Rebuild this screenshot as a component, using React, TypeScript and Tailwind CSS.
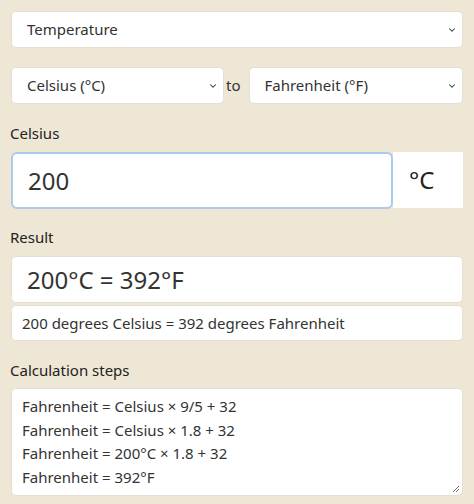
import { ChevronDown } from "lucide-react";

const steps = [
  "Fahrenheit = Celsius × 9/5 + 32",
  "Fahrenheit = Celsius × 1.8 + 32",
  "Fahrenheit = 200°C × 1.8 + 32",
  "Fahrenheit = 392°F",
];

const Select = ({ label, className }: { label: string; className?: string }) => (
  <div
    className={`flex items-center justify-between h-[37px] rounded-[5px] bg-white border border-[#e6e0d2] pl-[15px] pr-[5px] text-[15px] text-[#333] ${className ?? ""}`}
  >
    <span>{label}</span>
    <ChevronDown className="w-[10px] h-[10px] text-[#333]" strokeWidth={2.5} />
  </div>
);

export default function App() {
  return (
    <div
      className="min-h-[504px] w-[474px] bg-[#efe7d5] px-[11px] pt-[11px] text-[#333]"
      style={{ fontFamily: '"Noto Sans", "Open Sans", sans-serif' }}
    >
      <Select label="Temperature" />

      <div className="flex items-center mt-[19px]">
        <Select label="Celsius (°C)" className="w-[213px]" />
        <span className="ml-[2px] mr-[8px] text-[15px] text-[#333]">to</span>
        <Select label="Fahrenheit (°F)" className="flex-1" />
      </div>

      <div className="mt-[18px] text-[15px] leading-[22px] text-[#222] -ml-[1px]">Celsius</div>
      <div className="flex mt-[8px]">
        <div className="flex-1 h-[57px] rounded-[6px] bg-white border-2 border-[#a9cbee] flex items-center pl-[15px] text-[24px] text-[#333]">
          200
        </div>
        <div className="w-[70px] h-[56px] bg-white flex items-center pl-[16px] text-[24px] text-[#222]">
          °C
        </div>
      </div>

      <div className="mt-[17px] text-[15px] leading-[22px] text-[#222] -ml-[1px]">Result</div>
      <div className="mt-[8px] h-[47px] rounded-[5px] bg-white border border-[#e6e0d2] flex items-center pl-[15px] text-[24px] text-[#333]">
        200°C = 392°F
      </div>
      <div className="mt-[2px] h-[36px] rounded-[5px] bg-white border border-[#e6e0d2] flex items-center pl-[10px] text-[15px] text-[#333]">
        200 degrees Celsius = 392 degrees Fahrenheit
      </div>

      <div className="mt-[18px] text-[15px] leading-[22px] text-[#222] -ml-[1px]">Calculation steps</div>
      <div className="relative mt-[7px] h-[108px] rounded-[5px] bg-white border border-[#e6e0d2] pl-[10px] pt-[6px] text-[15px] leading-[23.5px] text-[#333]">
        {steps.map((s) => (
          <div key={s}>{s}</div>
        ))}
        <svg className="absolute right-[2px] bottom-[2px]" width="8" height="8" viewBox="0 0 8 8">
          <path d="M7 1 L1 7 M7 4 L4 7" stroke="#777" strokeWidth="1" />
        </svg>
      </div>
    </div>
  );
}
